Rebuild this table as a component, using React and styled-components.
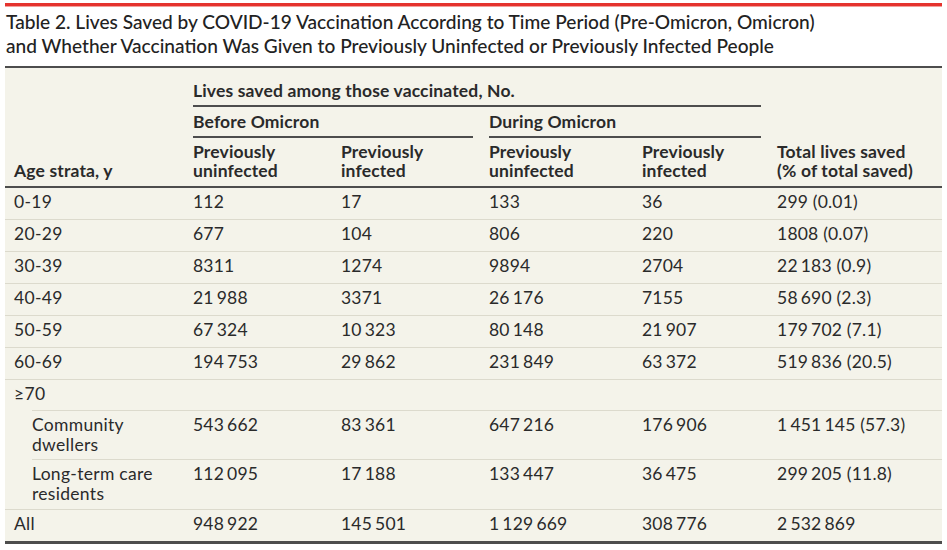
import styled, { createGlobalStyle } from "styled-components";

const GlobalStyle = createGlobalStyle`
  html, body {
    margin: 0;
    padding: 0;
    background: #fff;
  }
  body {
    font-family: Lato, "Open Sans", "Liberation Sans", sans-serif;
    color: #2a2a2a;
  }
`;

// thousands separator marker, drawn as a thin gap
const T = "|";

const rows = [
  { age: ["0-19"], cells: ["112", "17", "133", "36", "299 (0.01)"] },
  { age: ["20-29"], cells: ["677", "104", "806", "220", "1808 (0.07)"] },
  { age: ["30-39"], cells: ["8311", "1274", "9894", "2704", `22${T}183 (0.9)`] },
  { age: ["40-49"], cells: [`21${T}988`, "3371", `26${T}176`, "7155", `58${T}690 (2.3)`] },
  { age: ["50-59"], cells: [`67${T}324`, `10${T}323`, `80${T}148`, `21${T}907`, `179${T}702 (7.1)`] },
  { age: ["60-69"], cells: [`194${T}753`, `29${T}862`, `231${T}849`, `63${T}372`, `519${T}836 (20.5)`] },
  { age: ["≥70"], cells: ["", "", "", "", ""], rule: "indent" },
  {
    age: ["Community", "dwellers"],
    cells: [`543${T}662`, `83${T}361`, `647${T}216`, `176${T}906`, `1${T}451${T}145 (57.3)`],
    sub: true,
    rule: "indent",
  },
  {
    age: ["Long-term care", "residents"],
    cells: [`112${T}095`, `17${T}188`, `133${T}447`, `36${T}475`, `299${T}205 (11.8)`],
    sub: true,
  },
  {
    age: ["All"],
    cells: [`948${T}922`, `145${T}501`, `1${T}129${T}669`, `308${T}776`, `2${T}532${T}869`],
    last: true,
  },
];

function Num({ value }) {
  const parts = value.split(T);
  return parts.map((p, i) => (
    <Group key={i} $gap={i > 0}>
      {p}
    </Group>
  ));
}

function Lines({ lines }) {
  return lines.map((l, i) => (
    <span key={i}>
      {i > 0 && <br />}
      {l}
    </span>
  ));
}

export default function App() {
  return (
    <Page>
      <GlobalStyle />
      <RedRule />
      <Title>
        Table 2. Lives Saved by COVID-19 Vaccination According to Time Period (Pre-Omicron, Omicron)
        <br />
        and Whether Vaccination Was Given to Previously Uninfected or Previously Infected People
      </Title>
      <Table>
        <colgroup>
          <col style={{ width: 188 }} />
          <col style={{ width: 148 }} />
          <col style={{ width: 148 }} />
          <col style={{ width: 153 }} />
          <col style={{ width: 135 }} />
          <col style={{ width: 165 }} />
        </colgroup>
        <thead>
          <tr>
            <HeadCell rowSpan={3} $first $bottom>
              Age strata, y
            </HeadCell>
            <GroupCell colSpan={4} $top>
              <GroupLabel>Lives saved among those vaccinated, No.</GroupLabel>
            </GroupCell>
            <HeadCell rowSpan={3} $bottom>
              <Lines lines={["Total lives saved", "(% of total saved)"]} />
            </HeadCell>
          </tr>
          <tr>
            <GroupCell colSpan={2}>
              <GroupLabel>Before Omicron</GroupLabel>
            </GroupCell>
            <GroupCell colSpan={2}>
              <GroupLabel>During Omicron</GroupLabel>
            </GroupCell>
          </tr>
          <tr>
            <HeadCell $bottom>
              <Lines lines={["Previously", "uninfected"]} />
            </HeadCell>
            <HeadCell $bottom>
              <Lines lines={["Previously", "infected"]} />
            </HeadCell>
            <HeadCell $bottom>
              <Lines lines={["Previously", "uninfected"]} />
            </HeadCell>
            <HeadCell $bottom>
              <Lines lines={["Previously", "infected"]} />
            </HeadCell>
          </tr>
        </thead>
        <tbody>
          {rows.map((r) => {
            const double = r.age.length > 1;
            return (
              <tr key={r.age.join(" ")}>
                <AgeCell $sub={r.sub} $rule={r.rule} $last={r.last} $double={double}>
                  <Lines lines={r.age} />
                </AgeCell>
                {r.cells.map((c, i) => (
                  <DataCell key={i} $last={r.last} $double={double}>
                    <Num value={c} />
                  </DataCell>
                ))}
              </tr>
            );
          })}
        </tbody>
      </Table>
    </Page>
  );
}

const Page = styled.div`
  width: 937px;
  padding: 3px 5px 0;
`;

const RedRule = styled.div`
  height: 3px;
  background: #e5332e;
  box-shadow: 0 1px 0 #f3a09c;
`;

const Title = styled.h1`
  margin: 4px 0 0;
  padding: 0 0 0 1px;
  font-family: Lato, "Open Sans", sans-serif;
  font-size: 19.1px;
  font-weight: 500;
  line-height: 24px;
  color: #222;
`;

const Table = styled.table`
  margin-top: 8px;
  width: 937px;
  table-layout: fixed;
  border-collapse: separate;
  border-spacing: 0;
  background: #f4f3ea;
  border-top: 2px solid #4d4d4d;
  font-size: 17.5px;
  line-height: 18px;
`;

const HeadCell = styled.th`
  text-align: left;
  vertical-align: bottom;
  font-weight: 700;
  line-height: 19px;
  letter-spacing: 0.15px;
  padding: 4px 0 6px ${(p) => (p.$first ? "9px" : "0")};
  border-bottom: ${(p) => (p.$bottom ? "2px solid #4d4d4d" : "none")};
  color: #2a2a2a;
`;

const GroupCell = styled.th`
  text-align: left;
  font-weight: 700;
  letter-spacing: 0.15px;
  padding: ${(p) => (p.$top ? "14px" : "6px")} 16px 0 0;
  color: #2a2a2a;
`;

const GroupLabel = styled.div`
  padding-bottom: 5px;
  border-bottom: 2px solid #4d4d4d;
`;

const AgeCell = styled.td`
  padding: 4px 0 ${(p) => (p.$double ? "5px" : "7px")} ${(p) => (p.$sub ? "27px" : "9px")};
  vertical-align: top;
  line-height: 20px;
  letter-spacing: 0.3px;
  border-bottom: ${(p) =>
    p.$last ? "3px solid #4d4d4d" : p.$rule ? "none" : "1px solid #dcdacd"};
  background: ${(p) =>
    p.$rule
      ? "linear-gradient(#dcdacd, #dcdacd) no-repeat 27px 100% / calc(100% - 27px) 1px"
      : "none"};
`;

const DataCell = styled.td`
  padding: 4px 0 ${(p) => (p.$double ? "5px" : "7px")};
  vertical-align: top;
  line-height: 20px;
  white-space: nowrap;
  letter-spacing: 0.2px;
  border-bottom: ${(p) => (p.$last ? "3px solid #4d4d4d" : "1px solid #dcdacd")};
`;

const Group = styled.span`
  margin-left: ${(p) => (p.$gap ? "3px" : "0")};
`;
